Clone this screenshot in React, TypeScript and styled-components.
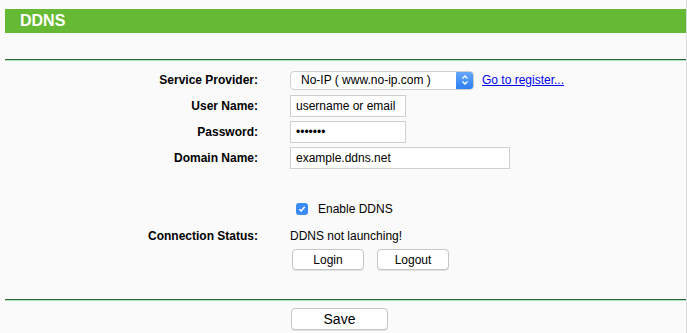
import React from "react";
import styled, { createGlobalStyle } from "styled-components";

const GlobalStyle = createGlobalStyle`
  html, body {
    margin: 0;
    padding: 0;
    background: #fafafa;
  }
  body {
    font-family: "Liberation Sans", Arial, Helvetica, sans-serif;
    font-size: 12px;
    color: #000;
  }
`;

const Page = styled.div`
  box-sizing: border-box;
  width: 687px;
  height: 333px;
  padding: 9px 0 0 5px;
  border-right: 1px solid #d9d9d9;
  overflow: hidden;
`;

const TitleBar = styled.div`
  height: 24px;
  background: #66b933;
  color: #fff;
  font-weight: bold;
  font-size: 16px;
  line-height: 24px;
  padding-left: 15px;
`;

const Divider = styled.div<{ $top: number }>`
  margin-top: ${(p) => p.$top}px;
  height: 1px;
  background: #2b6a3d;
  box-shadow: 0 1px 0 #b6dcbf;
`;

const Form = styled.div`
  display: grid;
  grid-template-columns: 253px 1fr;
  column-gap: 32px;
  grid-auto-rows: 22px;
  row-gap: 4px;
  margin-top: 9px;
  align-items: center;
`;

const Label = styled.div`
  font-weight: bold;
  text-align: right;
`;

const Field = styled.div`
  display: flex;
  align-items: center;
  gap: 8px;
`;

const Spacer = styled.div`
  grid-column: 1 / 3;
  height: 0;
`;

const Select = styled.div`
  display: flex;
  align-items: stretch;
  width: 184px;
  height: 19px;
  box-sizing: border-box;
  border: 1px solid #cfcfcf;
  border-radius: 4px;
  background: #fff;
  overflow: hidden;
`;

const SelectText = styled.div`
  flex: 1;
  padding-left: 10px;
  line-height: 17px;
`;

const Stepper = styled.div`
  width: 17px;
  background: linear-gradient(#64a8fa, #2f7ff2);
  display: flex;
  align-items: center;
  justify-content: center;
`;

const Link = styled.a`
  color: #0000ee;
  text-decoration: underline;
  cursor: pointer;
`;

const TextInput = styled.div<{ $w: number }>`
  box-sizing: border-box;
  width: ${(p) => p.$w}px;
  height: 22px;
  border: 1px solid #cfcfcf;
  background: #fff;
  padding-left: 5px;
  line-height: 20px;
`;

const CheckRow = styled.div`
  display: flex;
  align-items: center;
  gap: 10px;
  padding-left: 6px;
  margin-top: -2px;
`;

const CheckBox = styled.span`
  width: 12px;
  height: 12px;
  border-radius: 3px;
  background: #3a8bf6;
  display: flex;
  align-items: center;
  justify-content: center;
`;

const ButtonRow = styled.div`
  display: flex;
  gap: 13px;
  padding-left: 2px;
  align-self: start;
  margin-top: -2px;
`;

const Button = styled.button<{ $w: number }>`
  box-sizing: border-box;
  width: ${(p) => p.$w}px;
  height: 21px;
  border: 1px solid #c6c6c6;
  border-radius: 4px;
  background: #fff;
  font-family: "Liberation Sans", Arial, sans-serif;
  font-size: 12px;
  color: #000;
  padding: 0;
  box-shadow: 0 1px 0 #e2e2e2;
`;

const Footer = styled.div`
  display: flex;
  justify-content: center;
  padding: 8px 0 0 0;
  margin-left: -12px;
`;

const SaveButton = styled(Button)`
  font-size: 14px;
  height: 22px;
`;

export default function App() {
  return (
    <Page>
      <GlobalStyle />
      <TitleBar>DDNS</TitleBar>
      <Divider $top={26} />
      <Form>
        <Label>Service Provider:</Label>
        <Field>
          <Select>
            <SelectText>No-IP ( www.no-ip.com )</SelectText>
            <Stepper>
              <svg width="8" height="12" viewBox="0 0 8 12">
                <path d="M1.5 4.5 L4 2 L6.5 4.5 M1.5 7.5 L4 10 L6.5 7.5" fill="none" stroke="#fff" strokeWidth="1.3" />
              </svg>
            </Stepper>
          </Select>
          <Link>Go to register...</Link>
        </Field>
        <Label>User Name:</Label>
        <Field>
          <TextInput $w={116}>username or email</TextInput>
        </Field>
        <Label>Password:</Label>
        <Field>
          <TextInput $w={116}>•••••••</TextInput>
        </Field>
        <Label>Domain Name:</Label>
        <Field>
          <TextInput $w={220}>example.ddns.net</TextInput>
        </Field>
        <Spacer />
        <div />
        <CheckRow>
          <CheckBox>
            <svg width="8" height="8" viewBox="0 0 8 8">
              <path d="M1.3 4.2 L3.2 6 L6.7 1.8" fill="none" stroke="#fff" strokeWidth="1.5" />
            </svg>
          </CheckBox>
          <span>Enable DDNS</span>
        </CheckRow>
        <Label>Connection Status:</Label>
        <div>DDNS not launching!</div>
        <div />
        <ButtonRow>
          <Button $w={72}>Login</Button>
          <Button $w={72}>Logout</Button>
        </ButtonRow>
      </Form>
      <Divider $top={26} />
      <Footer>
        <SaveButton $w={97}>Save</SaveButton>
      </Footer>
    </Page>
  );
}
